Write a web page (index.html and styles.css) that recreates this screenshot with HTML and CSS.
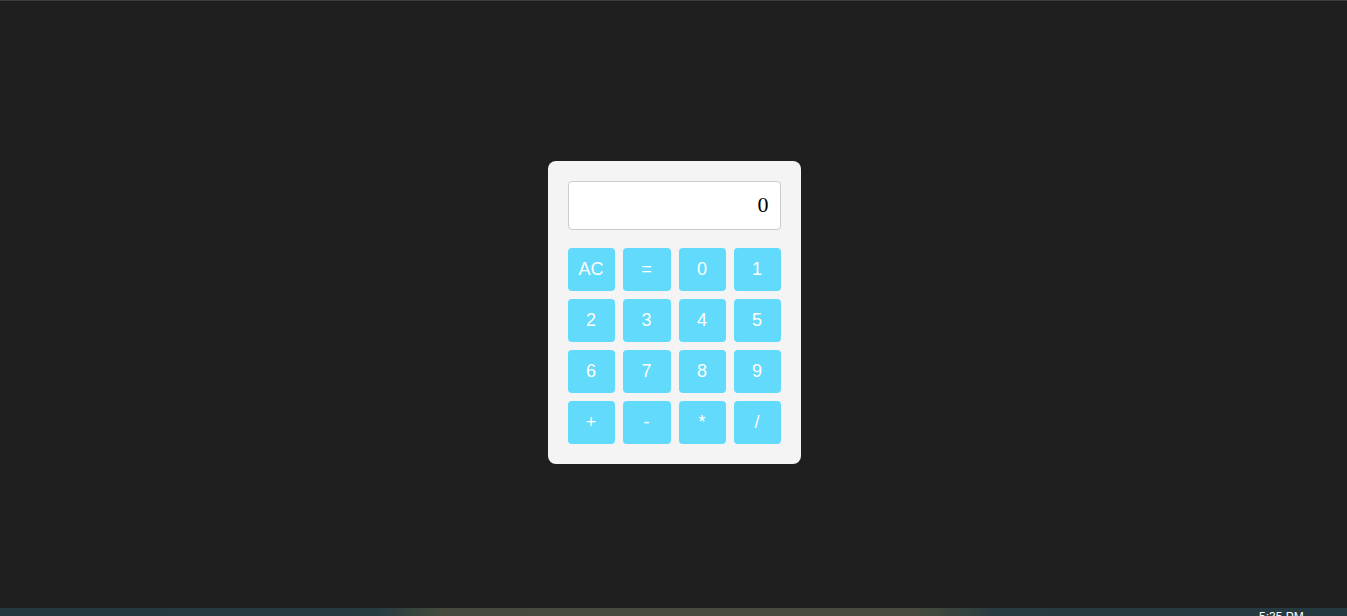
FILE: index.html
```html
<!DOCTYPE html>
<html>
<head>
<meta charset="utf-8">
<link rel="stylesheet" href="styles.css">
</head>
<body>
<div class="topline"></div>
<main class="stage">
  <div class="calculator">
    <input class="display" type="text" value="0" readonly>
    <div class="keys">
      <button class="key">AC</button>
      <button class="key">=</button>
      <button class="key">0</button>
      <button class="key">1</button>
      <button class="key">2</button>
      <button class="key">3</button>
      <button class="key">4</button>
      <button class="key">5</button>
      <button class="key">6</button>
      <button class="key">7</button>
      <button class="key">8</button>
      <button class="key">9</button>
      <button class="key">+</button>
      <button class="key">-</button>
      <button class="key">*</button>
      <button class="key">/</button>
    </div>
  </div>
</main>
<footer class="taskbar"><span class="clock">5:35 PM</span></footer>
</body>
</html>
```

FILE: styles.css
```css
html, body {
  margin: 0;
  padding: 0;
  height: 616px;
  overflow: hidden;
  background: #1f1f1f;
}
body {
  display: flex;
  flex-direction: column;
  font-family: "Liberation Sans", Arial, sans-serif;
}
.topline {
  height: 1px;
  background: #3d3d3d;
  flex: none;
}
.stage {
  flex: 1;
  display: flex;
  align-items: center;
  justify-content: center;
  padding-top: 15px;
  padding-left: 1px;
}
.calculator {
  width: 213px;
  padding: 20px;
  background: #f4f4f4;
  border-radius: 8px;
}
.display {
  display: block;
  box-sizing: border-box;
  width: 213px;
  height: 49px;
  margin: 0 0 18px 0;
  padding: 0 11px 0 10px;
  border: 1px solid #cccccc;
  border-radius: 4px;
  background: #ffffff;
  font-family: "Liberation Serif", "Times New Roman", serif;
  font-size: 22px;
  color: #000;
  text-align: right;
  outline: none;
}
.keys {
  display: grid;
  grid-template-columns: 47px 48px 47px 47px;
  column-gap: 8px;
  row-gap: 8px;
  grid-auto-rows: 43px;
}
.key {
  border: none;
  border-radius: 4px;
  background: #61dafb;
  color: #ffffff;
  font-family: "Liberation Sans", Arial, sans-serif;
  font-size: 18px;
  padding: 0;
  cursor: pointer;
}
.taskbar {
  flex: none;
  height: 8px;
  overflow: hidden;
  position: relative;
  background: linear-gradient(90deg, #253a40 0%, #263b40 28%, #464a3c 33%, #474a3c 68%, #283b40 74%, #253940 100%);
}
.clock {
  position: absolute;
  left: 1259px;
  top: 2px;
  font-family: "Segoe UI", "Liberation Sans", sans-serif;
  font-size: 12px;
  line-height: 14px;
  color: #ffffff;
}
```
